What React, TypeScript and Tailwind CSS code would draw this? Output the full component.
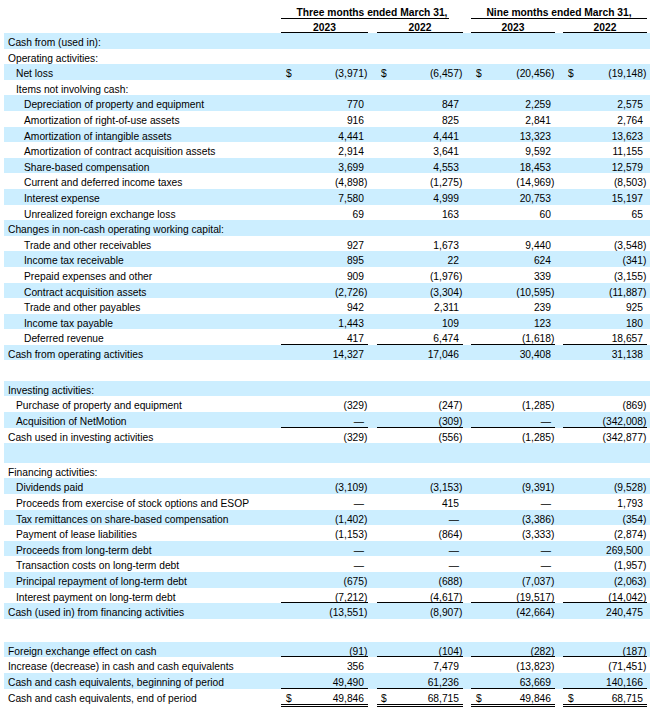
import React from "react";

type Line = "none" | "single" | "double";
type Row =
  | { kind: "row"; label: string; indent: number; vals?: string[]; dollar?: boolean; line?: Line }
  | { kind: "spacer"; h: string };

const rows: Row[] = [
  { kind: "row", label: "Cash from (used in):", indent: 0 },
  { kind: "row", label: "Operating activities:", indent: 0 },
  { kind: "row", label: "Net loss", indent: 1, vals: ["(3,971)", "(6,457)", "(20,456)", "(19,148)"], dollar: true },
  { kind: "row", label: "Items not involving cash:", indent: 1 },
  { kind: "row", label: "Depreciation of property and equipment", indent: 2, vals: ["770", "847", "2,259", "2,575"] },
  { kind: "row", label: "Amortization of right-of-use assets", indent: 2, vals: ["916", "825", "2,841", "2,764"] },
  { kind: "row", label: "Amortization of intangible assets", indent: 2, vals: ["4,441", "4,441", "13,323", "13,623"] },
  { kind: "row", label: "Amortization of contract acquisition assets", indent: 2, vals: ["2,914", "3,641", "9,592", "11,155"] },
  { kind: "row", label: "Share-based compensation", indent: 2, vals: ["3,699", "4,553", "18,453", "12,579"] },
  { kind: "row", label: "Current and deferred income taxes", indent: 2, vals: ["(4,898)", "(1,275)", "(14,969)", "(8,503)"] },
  { kind: "row", label: "Interest expense", indent: 2, vals: ["7,580", "4,999", "20,753", "15,197"] },
  { kind: "row", label: "Unrealized foreign exchange loss", indent: 2, vals: ["69", "163", "60", "65"] },
  { kind: "row", label: "Changes in non-cash operating working capital:", indent: 0 },
  { kind: "row", label: "Trade and other receivables", indent: 2, vals: ["927", "1,673", "9,440", "(3,548)"] },
  { kind: "row", label: "Income tax receivable", indent: 2, vals: ["895", "22", "624", "(341)"] },
  { kind: "row", label: "Prepaid expenses and other", indent: 2, vals: ["909", "(1,976)", "339", "(3,155)"] },
  { kind: "row", label: "Contract acquisition assets", indent: 2, vals: ["(2,726)", "(3,304)", "(10,595)", "(11,887)"] },
  { kind: "row", label: "Trade and other payables", indent: 2, vals: ["942", "2,311", "239", "925"] },
  { kind: "row", label: "Income tax payable", indent: 2, vals: ["1,443", "109", "123", "180"] },
  { kind: "row", label: "Deferred revenue", indent: 2, vals: ["417", "6,474", "(1,618)", "18,657"], line: "single" },
  { kind: "row", label: "Cash from operating activities", indent: 0, vals: ["14,327", "17,046", "30,408", "31,138"] },
  { kind: "spacer", h: "h-[20.4px]" },
  { kind: "row", label: "Investing activities:", indent: 0 },
  { kind: "row", label: "Purchase of property and equipment", indent: 1, vals: ["(329)", "(247)", "(1,285)", "(869)"] },
  { kind: "row", label: "Acquisition of NetMotion", indent: 1, vals: ["—", "(309)", "—", "(342,008)"], line: "single" },
  { kind: "row", label: "Cash used in investing activities", indent: 0, vals: ["(329)", "(556)", "(1,285)", "(342,877)"] },
  { kind: "spacer", h: "h-[19.6px]" },
  { kind: "row", label: "Financing activities:", indent: 0 },
  { kind: "row", label: "Dividends paid", indent: 1, vals: ["(3,109)", "(3,153)", "(9,391)", "(9,528)"] },
  { kind: "row", label: "Proceeds from exercise of stock options and ESOP", indent: 1, vals: ["—", "415", "—", "1,793"] },
  { kind: "row", label: "Tax remittances on share-based compensation", indent: 1, vals: ["(1,402)", "—", "(3,386)", "(354)"] },
  { kind: "row", label: "Payment of lease liabilities", indent: 1, vals: ["(1,153)", "(864)", "(3,333)", "(2,874)"] },
  { kind: "row", label: "Proceeds from long-term debt", indent: 1, vals: ["—", "—", "—", "269,500"] },
  { kind: "row", label: "Transaction costs on long-term debt", indent: 1, vals: ["—", "—", "—", "(1,957)"] },
  { kind: "row", label: "Principal repayment of long-term debt", indent: 1, vals: ["(675)", "(688)", "(7,037)", "(2,063)"] },
  { kind: "row", label: "Interest payment on long-term debt", indent: 1, vals: ["(7,212)", "(4,617)", "(19,517)", "(14,042)"], line: "single" },
  { kind: "row", label: "Cash (used in) from financing activities", indent: 0, vals: ["(13,551)", "(8,907)", "(42,664)", "240,475"] },
  { kind: "spacer", h: "h-[23px]" },
  { kind: "row", label: "Foreign exchange effect on cash", indent: 0, vals: ["(91)", "(104)", "(282)", "(187)"], line: "single" },
  { kind: "row", label: "Increase (decrease) in cash and cash equivalents", indent: 0, vals: ["356", "7,479", "(13,823)", "(71,451)"] },
  { kind: "row", label: "Cash and cash equivalents, beginning of period", indent: 0, vals: ["49,490", "61,236", "63,669", "140,166"], line: "single" },
  { kind: "row", label: "Cash and cash equivalents, end of period", indent: 0, vals: ["49,846", "68,715", "49,846", "68,715"], dollar: true, line: "double" },
];

const groupW = ["w-[87px]", "w-[86px]", "w-[84px]", "w-[84px]"];
const dollarPad = ["pl-[5px]", "pl-[4px]", "pl-[5px]", "pl-[5px]"];
const groupGap = ["", "ml-[9px]", "ml-[8px]", "ml-[8px]"];
const indentCls = ["pl-[4px]", "pl-[12px]", "pl-[20px]"];

function NumCell({ i, v, dollar, line }: { i: number; v?: string; dollar?: boolean; line?: Line }) {
  const neg = v ? v.startsWith("(") : false;
  const body = v ? (neg ? v.slice(0, -1) : v) : "";
  const lineCls =
    line === "single" ? "border-b border-black" : line === "double" ? "border-b-[3px] border-double border-black" : "";
  return (
    <div className={`${groupW[i]} ${groupGap[i]} ${lineCls} flex shrink-0 pt-[3px]`}>
      <span className={`${dollarPad[i]} w-[14px] shrink-0`}>{dollar ? "$" : ""}</span>
      <span className="flex-1 text-right whitespace-nowrap">{body}</span>
      <span className="w-[4px] shrink-0 whitespace-nowrap">{neg ? ")" : ""}</span>
    </div>
  );
}

export default function App() {
  let band = 0;
  return (
    <div
      className="w-[654px] h-[716px] bg-white text-black px-[4px] text-[10.25px] overflow-hidden"
      style={{ fontFamily: '"Liberation Sans", Arial, sans-serif' }}
    >
      {/* Header row 1 */}
      <div className="flex h-[19px] font-bold">
        <div className="w-[277px] shrink-0" />
        <div className="w-[182px] shrink-0 flex flex-col justify-end">
          <div className="text-center leading-[11px] whitespace-nowrap">Three months ended March 31,</div>
          <div className="h-px w-[168px] bg-black" />
        </div>
        <div className="w-[176px] ml-[8px] shrink-0 flex flex-col justify-end">
          <div className="text-center leading-[11px] whitespace-nowrap">Nine months ended March 31,</div>
          <div className="h-px w-full bg-black" />
        </div>
      </div>
      {/* Header row 2 */}
      <div className="flex h-[14px] font-bold">
        <div className="w-[277px] shrink-0" />
        {["2023", "2022", "2023", "2022"].map((y, i) => (
          <div key={i} className={`${groupW[i]} ${groupGap[i]} shrink-0 flex flex-col justify-end`}>
            <div className="text-center leading-[8px]">{y}</div>
            <div className="h-px w-full bg-black" />
          </div>
        ))}
      </div>
      {rows.map((r, idx) => {
        const blue = band % 2 === 0;
        band++;
        const bg = blue ? "bg-[#cceeff]" : "bg-white";
        if (r.kind === "spacer") {
          return <div key={idx} className={`${r.h} ${bg}`} />;
        }
        const h = r.line === "double" ? "h-[18.6px]" : "h-[15.6px]";
        return (
          <div key={idx} className={`flex ${h} ${bg} leading-[14px]`}>
            <div className={`w-[277px] shrink-0 pt-[3px] whitespace-nowrap ${indentCls[r.indent]}`}>{r.label}</div>
            {r.vals
              ? r.vals.map((v, i) => <NumCell key={i} i={i} v={v} dollar={r.dollar} line={r.line} />)
              : null}
          </div>
        );
      })}
    </div>
  );
}
